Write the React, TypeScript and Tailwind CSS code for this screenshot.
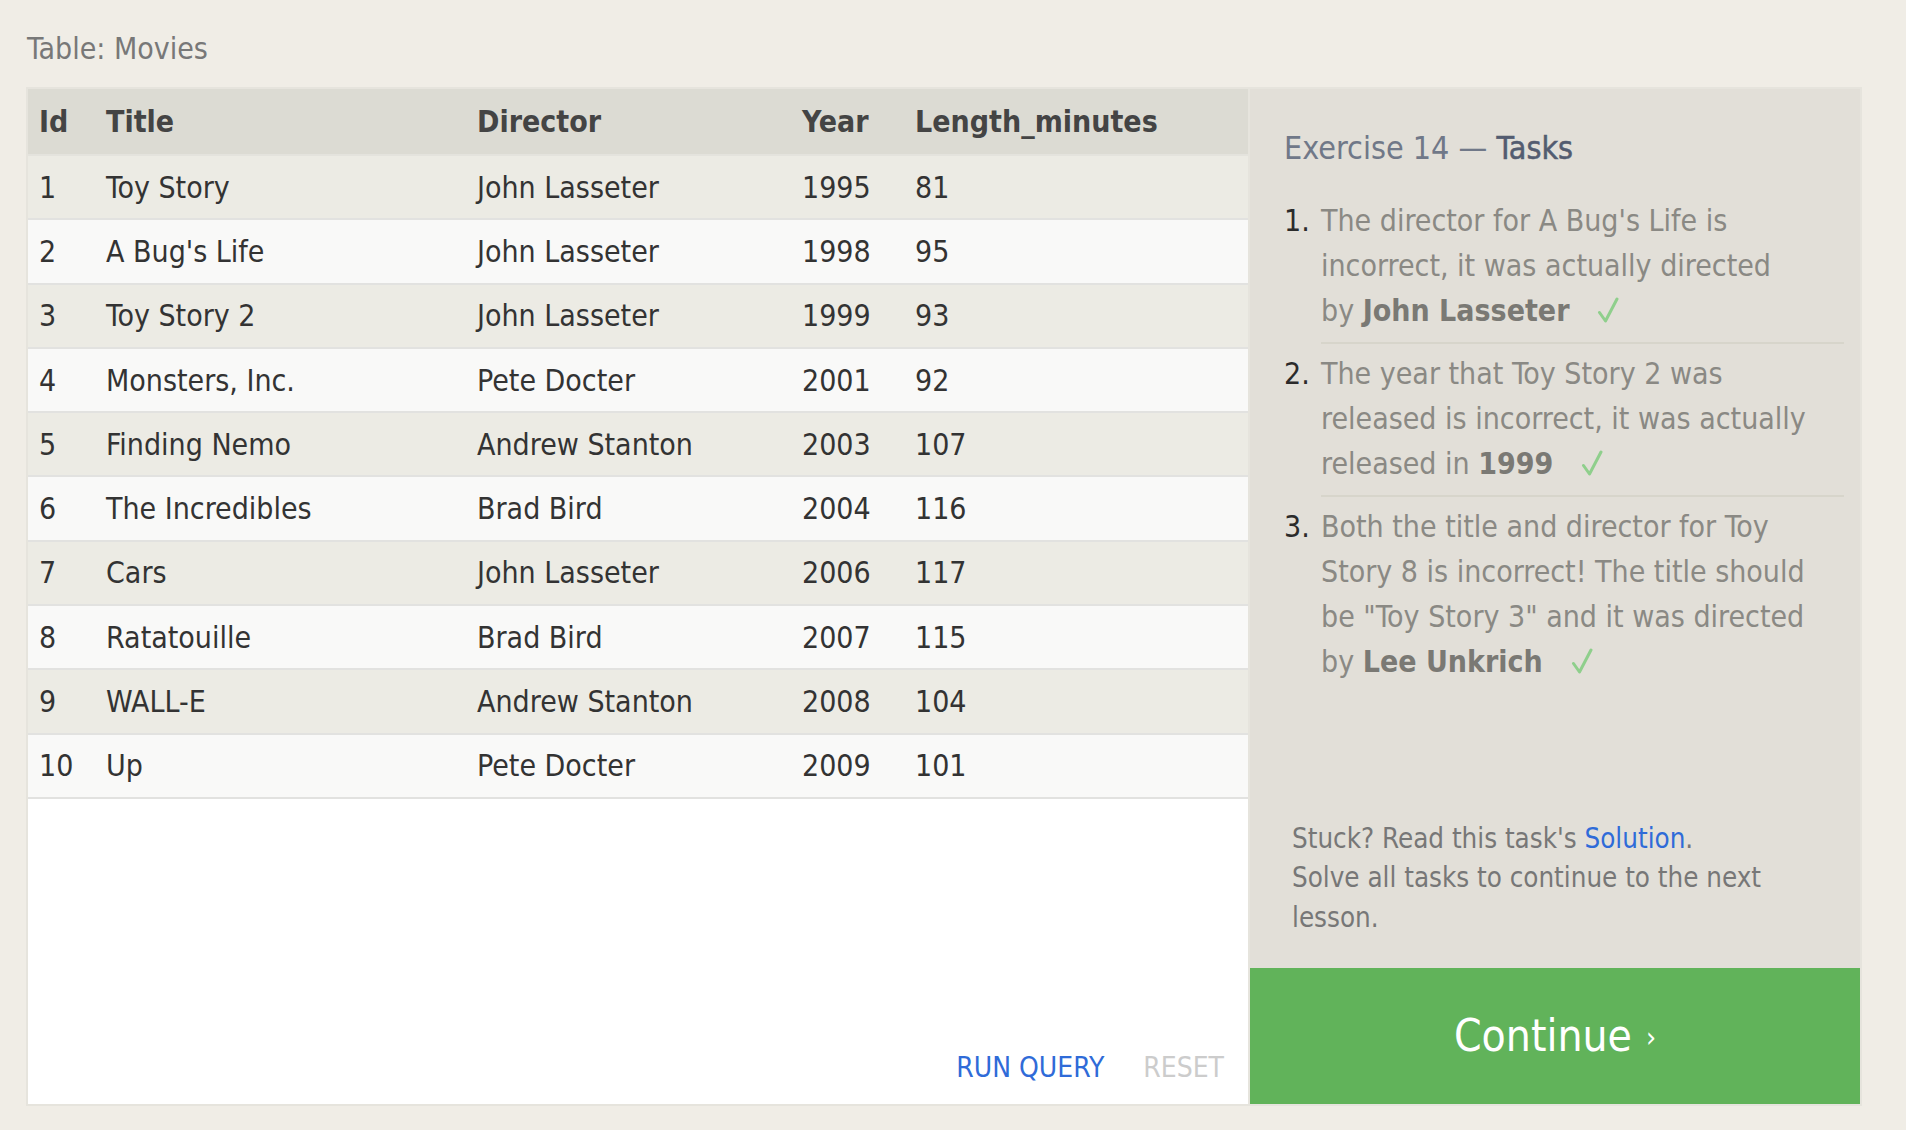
import React from "react";

const movies: [number, string, string, number, number][] = [
  [1, "Toy Story", "John Lasseter", 1995, 81],
  [2, "A Bug's Life", "John Lasseter", 1998, 95],
  [3, "Toy Story 2", "John Lasseter", 1999, 93],
  [4, "Monsters, Inc.", "Pete Docter", 2001, 92],
  [5, "Finding Nemo", "Andrew Stanton", 2003, 107],
  [6, "The Incredibles", "Brad Bird", 2004, 116],
  [7, "Cars", "John Lasseter", 2006, 117],
  [8, "Ratatouille", "Brad Bird", 2007, 115],
  [9, "WALL-E", "Andrew Stanton", 2008, 104],
  [10, "Up", "Pete Docter", 2009, 101],
];

const cols = "grid grid-cols-[66px_371px_325px_113px_1fr] items-center";

function Check() {
  return (
    <svg
      className="inline-block ml-[28px] align-[-2px]"
      width="22"
      height="26"
      viewBox="0 0 22 26"
      fill="none"
    >
      <path
        d="M2.5 15.5 L8.5 24 L20 2"
        stroke="#8fcf8c"
        strokeWidth="3"
        strokeLinecap="round"
        strokeLinejoin="round"
      />
    </svg>
  );
}

function Task({
  n,
  lines,
  last,
}: {
  n: number;
  lines: React.ReactNode[];
  last?: boolean;
}) {
  return (
    <li className={`flex ${last ? "" : "mb-[7px]"}`}>
      <span className="w-[37px] shrink-0 text-[#2b2b2b] leading-[45px]">{n}.</span>
      <div
        className={`flex-1 leading-[45px] ${last ? "" : "pb-[9px] border-b-2 border-[#d7d5cb]"}`}
      >
        {lines.map((l, i) => (
          <div key={i} className="whitespace-nowrap">
            {l}
          </div>
        ))}
      </div>
    </li>
  );
}

export default function App() {
  return (
    <div className="min-h-[1130px] w-full bg-[#f0ede6] pl-[26px] pt-[31px] font-['DejaVu_Sans_Condensed','DejaVu_Sans',sans-serif] font-stretch-condensed">
      <div className="h-[36px] leading-[36px] text-[30px] text-[#787878] mb-[20px] pl-[1px]">
        Table: Movies
      </div>
      <div className="w-[1836px] h-[1019px] border-2 border-[#e6e4dd] flex bg-[#e6e4dd]">
        {/* Table area */}
        <div className="w-[1220px] flex flex-col bg-white">
          <div
            className={`${cols} h-[67px] bg-[#dcdbd3] border-b-2 border-[#e4e3dd] text-[30px] font-bold text-[#444]`}
          >
            <div className="pl-[11px]">Id</div>
            <div className="pl-[12px]">Title</div>
            <div className="pl-[12px]">Director</div>
            <div className="pl-[12px]">Year</div>
            <div className="pl-[12px]">Length_minutes</div>
          </div>
          {movies.map((m, i) => (
            <div
              key={m[0]}
              className={`${cols} h-[64.3px] border-b-2 border-[#e2e2e0] text-[30px] text-[#333] ${
                i % 2 === 0 ? "bg-[#ecebe4]" : "bg-[#f9f9f8]"
              }`}
            >
              <div className="pl-[11px]">{m[0]}</div>
              <div className="pl-[12px]">{m[1]}</div>
              <div className="pl-[12px]">{m[2]}</div>
              <div className="pl-[12px]">{m[3]}</div>
              <div className="pl-[12px]">{m[4]}</div>
            </div>
          ))}
          <div className="flex-1 flex items-end justify-end pb-[20px] pr-[24px] gap-[39px] text-[28px] leading-[32px]">
            <span className="text-[#2f6bd8]">RUN QUERY</span>
            <span className="text-[#cccccc]">RESET</span>
          </div>
        </div>
        {/* Divider */}
        <div className="w-[2px] bg-[#e6e4dd]" />
        {/* Tasks panel */}
        <div className="w-[610px] flex flex-col bg-[#e2dfd8]">
          <div className="pl-[34px] pt-[39px] text-[32px] leading-[40px] text-[#707888]">
            Exercise 14 — <span className="text-[#535c70] [-webkit-text-stroke:0.5px_#535c70]">Tasks</span>
          </div>
          <ol className="pl-[34px] pr-[16px] mt-[30px] text-[30px] text-[#8a8984]">
            <Task
              n={1}
              lines={[
                "The director for A Bug's Life is",
                "incorrect, it was actually directed",
                <>
                  by <b className="text-[#7a7974]">John Lasseter</b>
                  <Check />
                </>,
              ]}
            />
            <Task
              n={2}
              lines={[
                "The year that Toy Story 2 was",
                "released is incorrect, it was actually",
                <>
                  released in <b className="text-[#7a7974]">1999</b>
                  <Check />
                </>,
              ]}
            />
            <Task
              n={3}
              last
              lines={[
                "Both the title and director for Toy",
                "Story 8 is incorrect! The title should",
                'be "Toy Story 3" and it was directed',
                <>
                  by <b className="text-[#7a7974]">Lee Unkrich</b>
                  <Check />
                </>,
              ]}
            />
          </ol>
          <div className="flex-1" />
          <div className="pl-[42px] pb-[31px] text-[27.5px] leading-[39.5px] text-[#777]">
            <div>
              Stuck? Read this task's <span className="text-[#2f6bd8]">Solution</span>.
            </div>
            <div>Solve all tasks to continue to the next</div>
            <div>lesson.</div>
          </div>
          <div className="h-[136px] bg-[#61b35a] flex items-center justify-center text-white">
            <span className="text-[44px] leading-none">Continue</span>
            <span className="text-[28px] leading-none ml-[14px] mt-[4px]">›</span>
          </div>
        </div>
      </div>
    </div>
  );
}
